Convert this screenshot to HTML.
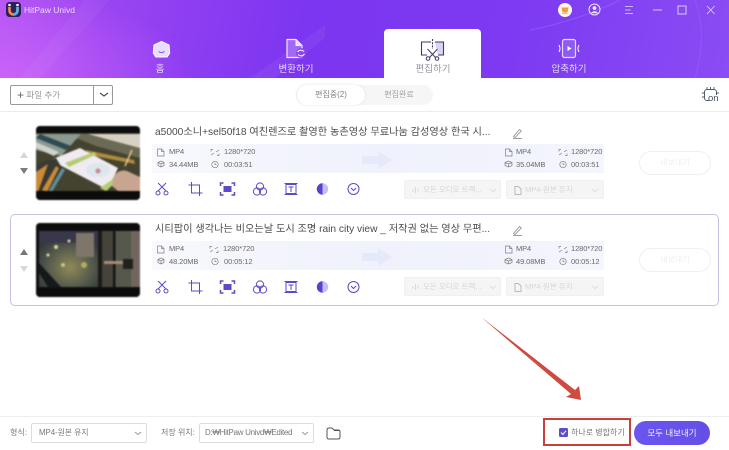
<!DOCTYPE html>
<html lang="ko"><head><meta charset="utf-8">
<style>
*{box-sizing:border-box}
html,body{margin:0;padding:0;background:#fff}
body{width:729px;height:450px;position:relative;overflow:hidden;font-family:"Liberation Sans","Noto Sans CJK KR",sans-serif;color:#555;filter:blur(.35px)}
.a{position:absolute;white-space:nowrap}
svg{position:absolute;overflow:visible}
#hd{left:0;top:0;width:729px;height:78px;background:radial-gradient(ellipse 190px 90px at 0 78px,rgba(210,105,250,.75),rgba(210,105,250,0)),linear-gradient(100deg,#b455f4 0,#9a45f2 14%,#7c35f0 42%,#7d3af2 70%,#8a4cf4 100%);overflow:hidden}
.nav{font-size:9.5px;color:#e6d8fb;transform:translateX(-50%)}
.title{font-size:10.2px;color:#4c4c4c;left:155px}
.bar{left:152px;width:452px;height:29px;background:linear-gradient(90deg,#f8f9fd 0,#eff1fc 50%,#f4f5fd 100%)}
.i{font-size:7.5px;color:#6a6a6a;letter-spacing:-.1px}
.sel{height:19px;background:#f5f5f6;border:1px solid #f0f0f1;border-radius:2px;font-size:7.5px;color:#d6d6d9;line-height:17px}
.exp{left:639px;width:72px;height:24px;border:1px solid #f0f0f2;border-radius:12px;background:#fff;color:#eeeef0;font-size:8px;text-align:center;line-height:22px}
.ic path,.ic circle,.ic rect{fill:none;stroke:#5b4bc4;stroke-width:1}
.g path,.g rect,.g circle{fill:none;stroke:#808080;stroke-width:.7}
.th{filter:blur(.7px)}
</style></head><body>

<div class="a" id="hd">
<svg width="729" height="78" style="left:0;top:0"><path d="M20 78L85 0H110L40 78Z" fill="#fff" opacity=".04"/><path d="M250 78L325 25L325 38L275 78Z" fill="#fff" opacity=".05"/><path d="M530 30Q580 20 620 0" stroke="#fff" stroke-opacity=".12" fill="none"/><path d="M695 0Q708 35 695 78" stroke="#fff" stroke-opacity=".08" fill="none"/></svg>
</div>

<!-- logo -->
<svg width="16" height="16" style="left:6px;top:2px"><rect width="15" height="15" rx="3.5" fill="#2f2058"/><path d="M3.500 5v3.500a4 4 0 0 0 8 0V5" fill="none" stroke="#f58a4b" stroke-width="2.600"/><path d="M7 12.400a4 4 0 0 0 4.500-3.900V5" fill="none" stroke="#4fb2f0" stroke-width="2.600"/><circle cx="3.500" cy="3" r="1.300" fill="#fff"/><circle cx="11.500" cy="3" r="1.300" fill="#fff"/></svg>
<div class="a" style="left:24px;top:4px;font-size:8.500px;color:#e8dcfb;line-height:12px">HitPaw Univd</div>

<!-- window controls -->
<svg width="170" height="20" style="left:555px;top:0">
<circle cx="10" cy="10" r="7" fill="#fdf6ea"/><path d="M6.500 7.500h7l-1 4.500h-5z" fill="#ef9a3d"/><rect x="7.500" y="12.500" width="5" height="1.200" fill="#ef9a3d"/>
<circle cx="39.500" cy="9.500" r="5.500" fill="none" stroke="#efe6fd" stroke-width="1"/><circle cx="39.500" cy="8" r="1.900" fill="#efe6fd"/><path d="M35.800 13.200q3.700-3.800 7.400 0" fill="#efe6fd"/>
<path d="M70 6.500h8M70 10h5.500M70 13.500h8" stroke="#cdb5fa" stroke-width=".9" fill="none"/>
<path d="M98 10h9" stroke="#ddcdfb" stroke-width="1" fill="none"/>
<rect x="123" y="6" width="8" height="8" fill="none" stroke="#ddcdfb" stroke-width="1"/>
<path d="M152 6l7.500 8M159.500 6l-7.500 8" stroke="#ddcdfb" stroke-width=".9" fill="none"/>
</svg>

<!-- nav -->
<svg width="20" height="20" style="left:152px;top:40px"><path d="M9.500 1.500L17 5l.7 8-2.500 4H3.800l-2.500-4L2 5z" fill="#e9dcfd" stroke="#fff" stroke-width="1"/><path d="M6.500 11.500q3 2 6 0" fill="none" stroke="#8b4ff0" stroke-width="1"/></svg>
<div class="a nav" style="left:160px;top:64px;line-height:12px">홈</div>

<svg width="24" height="22" style="left:285px;top:38px"><path d="M2 1.500h9l6 6v12H2z" fill="#a26af3" stroke="#f2eafd" stroke-width="1.200"/><path d="M11 1.500v6h6" fill="#e9dcfd" stroke="#f2eafd"/><circle cx="16" cy="15" r="5" fill="#8b45f1"/><path d="M12.500 14q3-3.500 6.500-.5M19.500 16q-3 3.500-6.500.5" fill="none" stroke="#fff" stroke-width="1"/></svg>
<div class="a nav" style="left:296px;top:64px;line-height:12px">변환하기</div>

<div class="a" style="left:384px;top:29px;width:97px;height:50px;background:#fff;border-radius:4px 4px 0 0"></div>
<svg width="26" height="24" style="left:420px;top:38px"><path d="M11 4H1.500v13H7" fill="none" stroke="#3c3a6b" stroke-width="1.100"/><path d="M15 4h8.500v13H18" fill="#d9d3f7" stroke="#3c3a6b" stroke-width="1.100"/><path d="M12.500 1v10" stroke="#3c3a6b" stroke-dasharray="2 1.200" stroke-width="1.100" fill="none"/><path d="M7.500 11l8.500 9M17.500 11L9 20" stroke="#3c3a6b" stroke-width="1" fill="none"/><circle cx="8" cy="20.500" r="1.800" fill="#fff" stroke="#3c3a6b"/><circle cx="17" cy="20.500" r="1.800" fill="#fff" stroke="#3c3a6b"/></svg>
<div class="a nav" style="left:433px;top:64px;line-height:12px;color:#94949e">편집하기</div>

<svg width="22" height="22" style="left:558px;top:38px"><rect x="4.500" y="1.500" width="13" height="18" rx="2" fill="#8f5cf2" stroke="#e6d9fc" stroke-width="1.200"/><path d="M9.500 8l4 2.500-4 2.500z" fill="#fff"/><path d="M1 7q2 3.500 0 7M21 7q-2 3.500 0 7" fill="none" stroke="#fff" stroke-width="1"/></svg>
<div class="a nav" style="left:569px;top:64px;line-height:12px">압축하기</div>

<!-- toolbar -->
<div class="a" style="left:0;top:111px;width:729px;height:1px;background:#ececee"></div>
<div class="a" style="left:10px;top:85px;width:103px;height:20px;border:1px solid #98989f;border-radius:2px;background:#fff"></div>
<div class="a" style="left:93px;top:85px;width:1px;height:20px;background:#98989f"></div>
<div class="a" style="left:17px;top:89px;font-size:8.500px;line-height:12px;color:#96969b"><span style="color:#66666c;font-size:12px;line-height:10px;vertical-align:-1px">+</span> 파일 추가</div>
<svg width="10" height="6" style="left:99px;top:92px"><path d="M1 1l4 3 4-3" fill="none" stroke="#4c4c55" stroke-width="1.200"/></svg>

<div class="a" style="left:296px;top:85px;width:137px;height:20px;background:#f6f6f7;border-radius:10px"></div>
<div class="a" style="left:297px;top:85px;width:68px;height:20px;background:#fff;border-radius:10px;box-shadow:0 0 3px rgba(0,0,0,.1);font-size:8px;line-height:20px;text-align:center;color:#808080">편집중(2)</div>
<div class="a" style="left:365px;top:85px;width:68px;height:20px;font-size:8px;line-height:20px;text-align:center;color:#a0a0a0">편집완료</div>

<svg width="18" height="18" style="left:702px;top:87px"><rect x="2.500" y="2.500" width="12" height="11" rx="2.500" fill="none" stroke="#4d5a6b" stroke-width="1"/><path d="M5 0v2.500M8.500 0v2.500M12 0v2.500M0 6h2.500M0 10h2.500M15 6h2" stroke="#4d5a6b" stroke-width=".9" fill="none"/><rect x="7" y="8" width="11" height="10" fill="#fff"/></svg>
<div class="a" style="left:708px;top:94px;font-size:9.500px;line-height:10px;color:#42505f">on</div>

<!-- item 1 -->
<svg width="12" height="40" style="left:18px;top:150px"><path d="M2 8l4-6 4 6z" fill="#d6d6d8"/><path d="M2 18h8l-4 6z" fill="#7b7b80"/></svg>
<svg class="th" width="104" height="74" viewBox="0 0 104 74" style="left:36px;top:126px">
<defs><clipPath id="c1"><rect width="104" height="74" rx="4"/></clipPath></defs>
<g clip-path="url(#c1)">
<rect width="104" height="74" fill="#44432f"/>
<path d="M0 8h104v24L60 20 30 8z" fill="#6b6a55"/>
<path d="M0 8h45L25 30 0 24z" fill="#8a9a90"/>
<path d="M0 12l30 12 5-4L4 8z" fill="#2f4a50"/>
<path d="M0 22l18 8 5-4L0 16z" fill="#cfd2c8"/>
<path d="M52 8h52v14L74 14z" fill="#d8d0c4"/>
<path d="M50 24l48 10 1 4-46-9z" fill="#b08a40"/>
<path d="M14 34L44 22 82 42 72 64z" fill="#efebf0"/>
<path d="M29 37L58 26l3 2-28 13z" fill="#b6cc72"/>
<path d="M64 62l13-9 2 4-9 8z" fill="#b6cc72"/>
<ellipse cx="62" cy="44" rx="12" ry="7" fill="#dce6ec"/>
<circle cx="62" cy="45" r="2.500" fill="#c88a90"/>
<path d="M0 38L20 32 26 42 10 66H0z" fill="#393a30"/>
<path d="M0 46l12-8-10 28H0zM6 64l14-24 3 2-12 24z" fill="#c98a3a"/>
<path d="M12 66l14-24 3 2-13 22z" fill="#5a8f9a"/>
<path d="M78 50q5-7 13-5l13 6v14H82l-6-5z" fill="#c7a58f"/>
<path d="M89 40L96 24" stroke="#e5cf80" stroke-width="1.500"/>
<rect y="0" width="104" height="7" fill="#0c0c0c"/>
<rect y="65" width="104" height="9" fill="#0c0c0c"/>
</g></svg>

<div class="a title" style="top:126px;line-height:14px">a5000소니+sel50f18 여친렌즈로 촬영한 농촌영상 무료나눔 감성영상 한국 시...</div>
<svg width="11" height="11" class="g" style="left:512px;top:128px"><path d="M1.500 8.500L7.500 1.500l1.800 1.500L3 9.500zM1 10.500h9"/></svg>

<div class="a bar" style="top:144px"></div>
<svg width="50" height="20" style="left:362px;top:149px"><path d="M0 7h16V2l14 9-14 9v-5H0z" fill="#e2e5f9" opacity=".7"/></svg>

<!-- info left 1 -->
<svg width="90" height="24" class="g" style="left:156px;top:148px"><path d="M1.500 1h4l2.500 2.500V8h-6.500zM5.500 1v2.500H8"/><path d="M57 1.500h-2v2M61 7.500h2v-2M55 7l3-2M63 2l-3 2"/><path d="M2 14.500l3-1.500 3 1.500v3l-3 1.500-3-1.500zM2 14.500l3 1.500 3-1.500M5 16v3"/><circle cx="59" cy="16.500" r="3.200"/><path d="M59 14.800v1.700h1.500"/></svg>
<div class="a i" style="left:169px;top:147px;line-height:10px">MP4</div>
<div class="a i" style="left:224px;top:147px;line-height:10px">1280*720</div>
<div class="a i" style="left:169px;top:160px;line-height:10px">34.44MB</div>
<div class="a i" style="left:224px;top:160px;line-height:10px">00:03:51</div>
<!-- info right 1 -->
<svg width="100" height="24" class="g" style="left:504px;top:148px"><path d="M1.500 1h4l2.500 2.500V8h-6.500zM5.500 1v2.500H8"/><path d="M57 1.500h-2v2M61 7.500h2v-2M55 7l3-2M63 2l-3 2"/><path d="M1 14.500l3.500-1.500 3.500 1.500v3l-3.500 1.500-3.500-1.500zM1 14.500l3.500 1.500 3.500-1.500M4.500 16v3"/><circle cx="59" cy="16.500" r="3.200"/><path d="M59 14.800v1.700h1.500"/></svg>
<div class="a i" style="left:516px;top:147px;line-height:10px">MP4</div>
<div class="a i" style="left:571px;top:147px;line-height:10px">1280*720</div>
<div class="a i" style="left:516px;top:160px;line-height:10px">35.04MB</div>
<div class="a i" style="left:571px;top:160px;line-height:10px">00:03:51</div>

<!-- tools 1 -->
<svg width="210" height="16" class="ic" style="left:155px;top:181px">
<path d="M3 2l8 8M11 2L3 10"/><circle cx="3" cy="12" r="2"/><circle cx="11" cy="12" r="2"/>
<path d="M36.500 1v11h11M33.500 4h11v11"/>
<path d="M65.500 5V2h3M76.500 2h3v3M79.500 11v3h-3M68.500 14h-3v-3" style="stroke-width:1.500"/><rect x="69" y="5.500" width="7" height="5" style="fill:#5b4bc4"/>
<circle cx="105" cy="5.500" r="3.600"/><circle cx="102" cy="10.500" r="3.600"/><circle cx="108" cy="10.500" r="3.600"/>
<rect x="131" y="3.500" width="10" height="9"/><path d="M129.500 2.500h13M129.500 13.500h13M133.500 6h5M136 6v5"/>
<circle cx="167.500" cy="8" r="5.700" style="fill:#c4bef3;stroke:none"/><path d="M167.500 2.300a5.700 5.700 0 0 0 0 11.400z" style="fill:#5443d2;stroke:none"/>
<circle cx="198.500" cy="8" r="5.500"/><path d="M196 7l2.500 2.500L201 7"/>
</svg>

<div class="a sel" style="left:404px;top:180px;width:97px;padding-left:18px">모든 오디오 트랙...</div>
<svg width="10" height="8" class="g" style="left:412px;top:186px"><path d="M1 3v3M3.500 1v6M6 2.500v3" style="stroke:#cfcfd2"/></svg>
<svg width="8" height="5" style="left:489px;top:188px"><path d="M1 1l3 2.500L7 1" fill="none" stroke="#ddd"/></svg>
<div class="a sel" style="left:506px;top:180px;width:98px;padding-left:18px">MP4-원본 유지</div>
<svg width="8" height="9" style="left:514px;top:186px"><path d="M1 .5h3.500L7 3v5.500H1z" fill="none" stroke="#bbb"/></svg>
<svg width="8" height="5" style="left:591px;top:188px"><path d="M1 1l3 2.500L7 1" fill="none" stroke="#ddd"/></svg>
<div class="a exp" style="top:151px">내보내기</div>

<!-- item 2 -->
<div class="a" style="left:10px;top:214px;width:709px;height:92px;border:1px solid #c4c1de;border-radius:5px"></div>
<svg width="12" height="40" style="left:18px;top:247px"><path d="M2 8l4-6 4 6z" fill="#77777c"/><path d="M2 19h8l-4 6z" fill="#d8d8da"/></svg>
<svg class="th" width="104" height="74" viewBox="0 0 104 74" style="left:36px;top:223px">
<defs><clipPath id="c2"><rect width="104" height="74" rx="4"/></clipPath><radialGradient id="g2" cx=".5" cy=".65" r=".6"><stop offset="0" stop-color="#8f8a58"/><stop offset=".6" stop-color="#555a4c"/><stop offset="1" stop-color="#35393b"/></radialGradient></defs>
<g clip-path="url(#c2)">
<rect width="104" height="74" fill="#111"/>
<rect x="3" y="8" width="62" height="56" fill="url(#g2)"/>
<rect x="3" y="8" width="62" height="12" fill="#39374a"/>
<rect x="40" y="10" width="18" height="24" fill="#7e766a"/>
<path d="M3 40l22 24H12L3 50z" fill="#16181a"/>
<rect x="66" y="8" width="11" height="56" fill="#45433c"/>
<rect x="79" y="8" width="16" height="56" fill="#56584c"/>
<rect x="95" y="8" width="9" height="56" fill="#71655f"/>
<rect x="62" y="8" width="4" height="56" fill="#1a1a18"/>
<rect x="77" y="8" width="2.500" height="56" fill="#151513"/>
<rect x="68" y="38" width="22" height="3" fill="#a98d7c"/>
<rect x="87" y="36" width="10" height="10" fill="#20201e"/>
<circle cx="20" cy="24" r="2" fill="#d8d5a8"/><circle cx="33" cy="18" r="1.500" fill="#d8d5a8"/><circle cx="12" cy="32" r="1.500" fill="#e0dca8"/><circle cx="48" cy="42" r="3" fill="#b7ac5a"/><circle cx="27" cy="42" r="2" fill="#c8c48a"/>
<rect y="0" width="104" height="7" fill="#0c0c0c"/>
<rect y="65" width="104" height="9" fill="#0c0c0c"/>
</g></svg>

<div class="a title" style="top:223px;line-height:14px">시티팝이 생각나는 비오는날 도시 조명 rain city view _ 저작권 없는 영상 무편...</div>
<svg width="11" height="11" class="g" style="left:512px;top:225px"><path d="M1.500 8.500L7.500 1.500l1.800 1.500L3 9.500zM1 10.500h9"/></svg>

<div class="a bar" style="top:241px"></div>
<svg width="50" height="20" style="left:362px;top:246px"><path d="M0 7h16V2l14 9-14 9v-5H0z" fill="#e2e5f9" opacity=".7"/></svg>

<svg width="90" height="24" class="g" style="left:156px;top:245px"><path d="M1.500 1h4l2.500 2.500V8h-6.500zM5.500 1v2.500H8"/><path d="M56 1.500h-2v2M60 7.500h2v-2M54 7l3-2M62 2l-3 2"/><path d="M2 14.500l3-1.500 3 1.500v3l-3 1.500-3-1.500zM2 14.500l3 1.500 3-1.500M5 16v3"/><circle cx="59" cy="16.500" r="3.200"/><path d="M59 14.800v1.700h1.500"/></svg>
<div class="a i" style="left:169px;top:244px;line-height:10px">MP4</div>
<div class="a i" style="left:223px;top:244px;line-height:10px">1280*720</div>
<div class="a i" style="left:169px;top:257px;line-height:10px">48.20MB</div>
<div class="a i" style="left:224px;top:257px;line-height:10px">00:05:12</div>
<svg width="100" height="24" class="g" style="left:504px;top:245px"><path d="M1.500 1h4l2.500 2.500V8h-6.500zM5.500 1v2.500H8"/><path d="M57 1.500h-2v2M61 7.500h2v-2M55 7l3-2M63 2l-3 2"/><path d="M1 14.500l3.500-1.500 3.500 1.500v3l-3.500 1.500-3.500-1.500zM1 14.500l3.500 1.500 3.500-1.500M4.500 16v3"/><circle cx="59" cy="16.500" r="3.200"/><path d="M59 14.800v1.700h1.500"/></svg>
<div class="a i" style="left:516px;top:244px;line-height:10px">MP4</div>
<div class="a i" style="left:571px;top:244px;line-height:10px">1280*720</div>
<div class="a i" style="left:516px;top:257px;line-height:10px">49.08MB</div>
<div class="a i" style="left:571px;top:257px;line-height:10px">00:05:12</div>

<svg width="210" height="16" class="ic" style="left:155px;top:279px">
<path d="M3 2l8 8M11 2L3 10"/><circle cx="3" cy="12" r="2"/><circle cx="11" cy="12" r="2"/>
<path d="M36.500 1v11h11M33.500 4h11v11"/>
<path d="M65.500 5V2h3M76.500 2h3v3M79.500 11v3h-3M68.500 14h-3v-3" style="stroke-width:1.500"/><rect x="69" y="5.500" width="7" height="5" style="fill:#5b4bc4"/>
<circle cx="105" cy="5.500" r="3.600"/><circle cx="102" cy="10.500" r="3.600"/><circle cx="108" cy="10.500" r="3.600"/>
<rect x="131" y="3.500" width="10" height="9"/><path d="M129.500 2.500h13M129.500 13.500h13M133.500 6h5M136 6v5"/>
<circle cx="167.500" cy="8" r="5.700" style="fill:#c4bef3;stroke:none"/><path d="M167.500 2.300a5.700 5.700 0 0 0 0 11.400z" style="fill:#5443d2;stroke:none"/>
<circle cx="198.500" cy="8" r="5.500"/><path d="M196 7l2.500 2.500L201 7"/>
</svg>

<div class="a sel" style="left:404px;top:277px;width:97px;padding-left:18px">모든 오디오 트랙...</div>
<svg width="10" height="8" class="g" style="left:412px;top:283px"><path d="M1 3v3M3.500 1v6M6 2.500v3" style="stroke:#cfcfd2"/></svg>
<svg width="8" height="5" style="left:489px;top:285px"><path d="M1 1l3 2.500L7 1" fill="none" stroke="#ddd"/></svg>
<div class="a sel" style="left:506px;top:277px;width:98px;padding-left:18px">MP4-원본 유지</div>
<svg width="8" height="9" style="left:514px;top:283px"><path d="M1 .5h3.500L7 3v5.500H1z" fill="none" stroke="#bbb"/></svg>
<svg width="8" height="5" style="left:591px;top:285px"><path d="M1 1l3 2.500L7 1" fill="none" stroke="#ddd"/></svg>
<div class="a exp" style="top:248px">내보내기</div>

<!-- arrow -->
<svg width="120" height="90" style="left:475px;top:312px"><path d="M6 5L100 78 104 74 106 88 91 85 96 82z" fill="#cf4a3f"/></svg>

<!-- footer -->
<div class="a" style="left:0;top:416px;width:729px;height:1px;background:#eeeeef"></div>
<div class="a" style="left:10px;top:427px;font-size:8px;line-height:12px;color:#777">형식:</div>
<div class="a" style="left:31px;top:423px;width:116px;height:20px;border:1px solid #dcdcdf;border-radius:2px;font-size:7.800px;line-height:18px;color:#777;padding-left:7px">MP4-원본 유지</div>
<svg width="8" height="5" style="left:134px;top:431px"><path d="M1 1l3 2.500L7 1" fill="none" stroke="#999"/></svg>
<div class="a" style="left:161px;top:427px;font-size:8px;line-height:12px;color:#777">저장 위치:</div>
<div class="a" style="left:199px;top:423px;width:115px;height:20px;border:1px solid #dcdcdf;border-radius:2px;font-size:8px;line-height:18px;color:#777;padding-left:5px;letter-spacing:-.3px">D:₩HitPaw Univd₩Edited</div>
<svg width="8" height="5" style="left:301px;top:431px"><path d="M1 1l3 2.500L7 1" fill="none" stroke="#999"/></svg>
<svg width="15" height="13" style="left:326px;top:427px"><path d="M1 3q0-2 2-2h3l2 2h4q2 0 2 2v5q0 2-2 2H3q-2 0-2-2z" fill="none" stroke="#555" stroke-width="1"/><path d="M8 3.500h6" stroke="#555" fill="none"/></svg>

<div class="a" style="left:543px;top:418px;width:88px;height:28px;border:2px solid #c8403a"></div>
<svg width="10" height="10" style="left:559px;top:428px"><rect width="9" height="9" rx="1.500" fill="#5d4ec9"/><path d="M2 4.500l1.900 2L7 2.800" fill="none" stroke="#fff" stroke-width="1"/></svg>
<div class="a" style="left:571px;top:427px;font-size:8px;line-height:12px;color:#777">하나로 병합하기</div>
<div class="a" style="left:634px;top:421px;width:76px;height:24px;border-radius:12px;background:linear-gradient(90deg,#6a55f0,#6450e6);color:#f1eefe;font-size:8.500px;line-height:24px;text-align:center">모두 내보내기</div>

</body></html>
